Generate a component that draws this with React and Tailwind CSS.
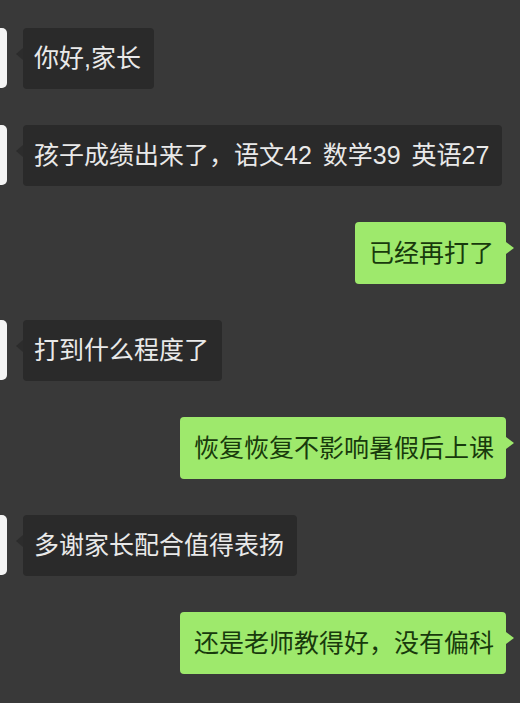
import React from 'react';

const messages = [
  { from: 'them', text: '你好,家长' },
  { from: 'them', text: '孩子成绩出来了，语文42 数学39 英语27' },
  { from: 'me', text: '已经再打了' },
  { from: 'them', text: '打到什么程度了' },
  { from: 'me', text: '恢复恢复不影响暑假后上课' },
  { from: 'them', text: '多谢家长配合值得表扬' },
  { from: 'me', text: '还是老师教得好，没有偏科' },
];

function Incoming({ text }) {
  return (
    <div className="flex items-start h-[61px]">
      <div className="w-[7px] h-[60px] bg-[#f4f4f4] rounded-r-[5px]" />
      <div className="relative ml-[16px] h-[61px] flex items-center pl-[11px] pr-[13px] bg-[#2a2a2a] rounded-[4px]">
        <div className="absolute left-[-7px] top-[20px] w-0 h-0 border-y-[6px] border-y-transparent border-r-[7px] border-r-[#2c2c2c]" />
        <span className="text-[25px] leading-none text-[#e9e9e9] whitespace-nowrap [word-spacing:4px]">{text}</span>
      </div>
    </div>
  );
}

function Outgoing({ text }) {
  return (
    <div className="flex justify-end h-[62px] pr-[14px]">
      <div className="relative h-[62px] flex items-center pl-[14px] pr-[12px] bg-[#9ee96c] rounded-[4px]">
        <div className="absolute right-[-8px] top-[20px] w-0 h-0 border-y-[6px] border-y-transparent border-l-[8px] border-l-[#9ee96c]" />
        <span className="text-[25px] leading-none text-[#183a0c] whitespace-nowrap">{text}</span>
      </div>
    </div>
  );
}

export default function App() {
  return (
    <div
      className="w-[520px] h-[703px] overflow-hidden bg-[#393939] pt-[28px] flex flex-col gap-[36px]"
      style={{ fontFamily: '"Liberation Sans", "Noto Sans CJK SC", sans-serif' }}
    >
      {messages.map((m, i) =>
        m.from === 'me' ? <Outgoing key={i} text={m.text} /> : <Incoming key={i} text={m.text} />
      )}
    </div>
  );
}
